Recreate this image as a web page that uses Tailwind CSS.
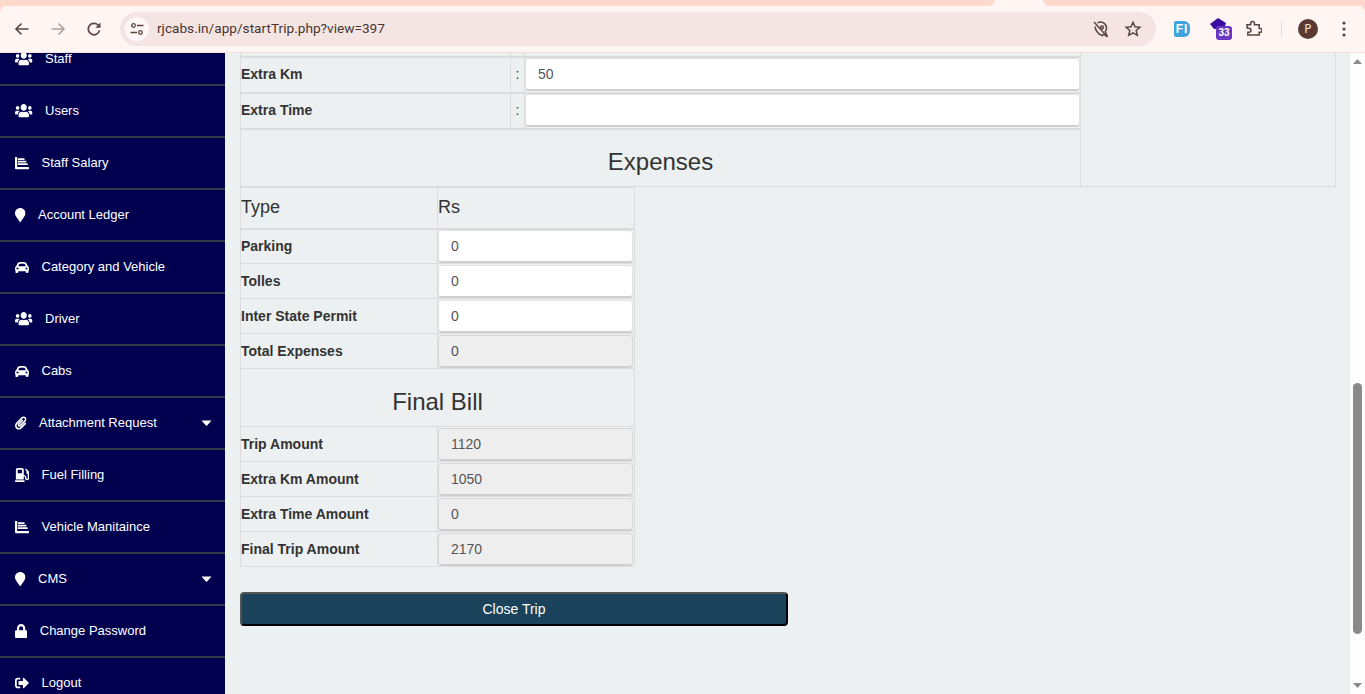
<!DOCTYPE html>
<html lang="en">
<head>
  <meta charset="UTF-8">
  <meta name="viewport" content="width=device-width, initial-scale=1.0">
  <title>Start Trip</title>
  <script src="https://cdn.jsdelivr.net/npm/@tailwindcss/browser@4"></script>
</head>
<body class="h-screen overflow-hidden flex flex-col bg-[#ecf0f1] font-['Liberation_Sans',Arial,sans-serif] text-[#333]">
  <svg class="hidden">
    <symbol id="i-users" viewBox="0 30 640 452" preserveAspectRatio="none"><path fill="currentColor" d="M96 224c35.3 0 64-28.7 64-64s-28.7-64-64-64-64 28.7-64 64 28.7 64 64 64zm448 0c35.3 0 64-28.7 64-64s-28.7-64-64-64-64 28.7-64 64 28.7 64 64 64zm32 32h-64c-17.6 0-33.5 7.1-45.1 18.6 40.3 22.1 68.9 62 75.1 109.4h66c17.7 0 32-14.3 32-32v-32c0-35.3-28.7-64-64-64zm-256 0c61.9 0 112-50.1 112-112S381.9 32 320 32 208 82.1 208 144s50.1 112 112 112zm76.8 32h-8.3c-20.8 10-43.9 16-68.5 16s-47.6-6-68.5-16h-8.3C179.6 288 128 339.6 128 403.2V432c0 26.5 21.5 48 48 48h288c26.5 0 48-21.5 48-48v-28.8c0-63.6-51.6-115.2-115.2-115.2zm-223.7-13.4C161.5 263.1 145.6 256 128 256H64c-35.3 0-64 28.7-64 64v32c0 17.7 14.3 32 32 32h65.9c6.3-47.4 34.9-87.3 75.2-109.4z"/></symbol>
    <symbol id="i-chart" viewBox="0 0 512 512"><path fill="currentColor" d="M0 48c0-9 7-16 16-16h48c9 0 16 7 16 16v352h416c9 0 16 7 16 16v48c0 9-7 16-16 16H32c-18 0-32-14-32-32V48zm104 32h232c9 0 16 7 16 16v32c0 9-7 16-16 16H104zm0 94h296c9 0 16 7 16 16v32c0 9-7 16-16 16H104zm0 94h344c9 0 16 7 16 16v32c0 9-7 16-16 16H104z"/></symbol>
    <symbol id="i-marker" viewBox="0 0 384 512"><path fill="currentColor" d="M172.268 501.67C26.97 291.031 0 256 0 192 0 85.961 85.961 0 192 0s192 85.961 192 192c0 64-26.97 99.031-172.268 309.67-9.535 13.774-29.93 13.773-39.464 0z"/></symbol>
    <symbol id="i-car" viewBox="16 64 480 384" preserveAspectRatio="none"><path fill="currentColor" d="M423.48 134.400C406.38 91.63 365.57 64 319.5 64h-127c-46.06 0-86.88 27.63-103.99 70.4L60 206C30 232 16 252.780 16 272v48c0 16.120 6.160 30.670 16 41.930V416c0 17.670 14.330 32 32 32h32c17.670 0 32-14.330 32-32v-32h256v32c0 17.670 14.330 32 32 32h32c17.670 0 32-14.330 32-32v-54.070c9.840-11.250 16-25.800 16-41.930v-48c0-19.220-14-40-44-66zm-275.550 23.770c7.290-18.220 24.940-30.170 44.570-30.170h127c19.630 0 37.280 11.950 44.570 30.170L384 208H128l19.930-49.830zM96 319.800c-19.200 0-32-12.760-32-31.900S76.800 256 96 256s48 28.710 48 47.850-28.800 15.950-48 15.950zm320 0c-19.200 0-48 3.190-48-15.950S396.800 256 416 256s32 12.760 32 31.900-12.800 31.900-32 31.900z"/></symbol>
    <symbol id="i-clip" viewBox="0 0 448 512"><path fill="currentColor" d="M43.246 466.142c-58.43-60.289-57.341-157.511 1.386-217.581L254.392 34c44.316-45.332 116.351-45.336 160.671 0 43.89 44.894 43.943 117.329 0 162.276L232.214 383.128c-29.855 30.537-78.633 30.111-107.982-.998-28.275-29.97-27.368-77.473 1.452-106.953l143.743-146.835c6.182-6.314 16.312-6.422 22.626-.241l22.861 22.379c6.315 6.182 6.422 16.312.241 22.626L171.427 319.927c-4.932 5.045-5.236 13.428-.648 18.292 4.372 4.634 11.245 4.711 15.688.165l182.849-186.851c19.613-20.062 19.613-52.725-.011-72.798-19.189-19.627-49.957-19.637-69.154 0L90.39 293.295c-34.763 35.56-35.299 93.12-1.191 128.313 34.01 35.093 88.985 35.137 123.058.286l172.06-175.999c6.177-6.319 16.307-6.433 22.626-.256l22.877 22.364c6.319 6.177 6.434 16.307.256 22.626l-172.06 175.998c-59.576 60.938-155.943 60.216-214.77-.485z"/></symbol>
    <symbol id="i-gas" viewBox="0 0 512 512"><path fill="currentColor" d="M336 448H16c-8.8 0-16 7.2-16 16v32c0 8.8 7.2 16 16 16h320c8.8 0 16-7.2 16-16v-32c0-8.8-7.2-16-16-16zm157.2-340.7l-81-81c-6.2-6.2-16.4-6.2-22.6 0l-11.3 11.3c-6.2 6.2-6.2 16.4 0 22.6L416 97.9V160c0 28.1 20.9 51.3 48 55.2V376c0 13.2-10.8 24-24 24s-24-10.8-24-24v-32c0-48.6-39.4-88-88-88h-8V64c0-35.3-28.7-64-64-64H96C60.7 0 32 28.7 32 64v352h288V304h8c22.1 0 40 17.9 40 40v27.8c0 37.7 27 72 64.5 75.9 43 4.3 79.5-29.5 79.5-71.7V152.6c0-17-6.8-33.3-18.8-45.3zM256 192H96V64h160v128z"/></symbol>
    <symbol id="i-lock" viewBox="0 0 448 512"><path fill="currentColor" d="M400 224h-24v-72C376 68.2 307.8 0 224 0S72 68.2 72 152v72H48c-26.5 0-48 21.5-48 48v192c0 26.5 21.5 48 48 48h352c26.5 0 48-21.5 48-48V272c0-26.5-21.5-48-48-48zm-104 0H152v-72c0-39.7 32.3-72 72-72s72 32.3 72 72v72z"/></symbol>
    <symbol id="i-out" viewBox="0 0 512 512"><path fill="currentColor" d="M497 273L329 441c-15 15-41 4.5-41-17v-96H152c-13.3 0-24-10.7-24-24v-96c0-13.3 10.7-24 24-24h136V88c0-21.4 25.9-32 41-17l168 168c9.3 9.4 9.3 24.6 0 34zM192 436v-40c0-6.6-5.4-12-12-12H96c-17.7 0-32-14.3-32-32V160c0-17.7 14.3-32 32-32h84c6.6 0 12-5.4 12-12V76c0-6.6-5.4-12-12-12H96c-53 0-96 43-96 96v192c0 53 43 96 96 96h84c6.6 0 12-5.4 12-12z"/></symbol>
    <symbol id="i-caret" viewBox="0 0 10 6"><path fill="currentColor" d="M0 .5h10L5.600 5.400a.8.8 0 0 1-1.200 0z"/></symbol>
  </svg>

  <!-- browser chrome -->
  <header class="shrink-0 bg-[#ffd9cc]">
    <div class="flex h-[6px] bg-[#fff5f2]">
      <div class="w-[995px] bg-[#ffd9cc] rounded-br-[8px]"></div>
      <div class="w-[48px]"></div>
      <div class="flex-1 bg-[#ffd9cc] rounded-bl-[8px]"></div>
    </div>
    <div class="h-[48px] bg-[#fff5f2] rounded-t-[8px] -mt-px border-b border-[#f8dfd8] flex items-center pl-[14px] text-[#5b4540]">
      <svg class="w-4 h-4" viewBox="0 0 16 16" fill="none" stroke="currentColor" stroke-width="1.6"><path d="M14.5 8H2M7.5 2.5 2 8l5.500 5.500"/></svg>
      <svg class="w-4 h-4 ml-[20px] text-[#b3a09b]" viewBox="0 0 16 16" fill="none" stroke="currentColor" stroke-width="1.6"><path d="M1.500 8H14M8.500 2.500 14 8l-5.500 5.500"/></svg>
      <svg class="w-4 h-4 ml-[20px]" viewBox="0 0 16 16" fill="none" stroke="currentColor" stroke-width="1.700"><path d="M13.500 9.500A5.700 5.700 0 1 1 12 4"/><path fill="currentColor" stroke="none" d="M14.500 1.500v5.200H9.300z"/></svg>
      <div class="ml-[18px] w-[1036px] h-[34px] rounded-full bg-[#f4e5e3] flex items-center pl-[5px] pr-[14px]">
        <div class="w-[24px] h-[24px] rounded-full bg-[#fff8f6] flex items-center justify-center">
          <svg class="w-[14px] h-[14px]" viewBox="0 0 14 14" fill="none" stroke="currentColor" stroke-width="1.300"><circle cx="3.500" cy="3.500" r="1.800"/><path d="M7 3.500h6.500M.5 10.500H7"/><circle cx="10.500" cy="10.500" r="1.800"/></svg>
        </div>
        <span class="ml-[8px] font-['Roboto',sans-serif] text-[13.650px] text-[#4a3633]">rjcabs.in/app/startTrip.php?view=397</span>
        <svg class="ml-auto w-[18px] h-[18px]" viewBox="0 0 18 18" fill="none" stroke="currentColor" stroke-width="1.500"><path d="M5.500 2.800a6 6 0 0 1 9 5.200c0 1.500-.5 2.600-1.200 3.500l1.700 4.500-4.600-1.600M3.300 6.500c-.3 2.800 1.700 5.500 3.700 7.500l4 2"/><circle cx="10" cy="7.500" r="1.400"/><path d="M2 2l13.500 15"/></svg>
        <svg class="ml-[14px] w-[18px] h-[18px]" viewBox="0 0 18 18" fill="none" stroke="currentColor" stroke-width="1.500"><path d="m9 2.300 2 4.500 4.900.5-3.700 3.200 1.100 4.800L9 12.800l-4.300 2.500 1.100-4.800L2.100 7.300 7 6.800z"/></svg>
      </div>
      <div class="ml-[18px] w-[16px] h-[16px] bg-[#3fa3e0] rounded-[2px] rounded-r-[6px] flex items-center justify-center text-white text-[12px] font-bold leading-none tracking-[1px]">FI</div>
      <div class="relative ml-[20px] w-[22px] h-[22px]">
        <svg class="absolute left-0 top-0 w-[16px] h-[13px]" viewBox="0 0 16 13"><path fill="#3a0ca3" d="M8 0l8 5-2 6H4L0 6z"/></svg>
        <span class="absolute left-[6px] top-[8px] w-[16px] h-[14px] rounded-[3px] bg-[#6a35c0] text-white text-[10px] font-bold leading-[14px] text-center">33</span>
      </div>
      <svg class="ml-[13px] w-[17px] h-[17px]" viewBox="0 0 18 18" fill="none" stroke="currentColor" stroke-width="1.600"><path d="M2 5h4V3.500a2 2 0 0 1 4 0V5h5v4h1a2 2 0 0 1 0 4h-1v3H3v-3h1.200a2 2 0 0 0 0-4.200H2.500z"/></svg>
      <div class="ml-[19px] w-px h-[16px] bg-[#fcd5c8]"></div>
      <div class="ml-[16px] w-[20px] h-[20px] rounded-full bg-[#5a3a30] text-[#f5e8e4] text-[12px] font-['Noto_Sans',sans-serif] flex items-center justify-center">P</div>
      <svg class="ml-[24px] w-[4px] h-[16px]" viewBox="0 0 4 16"><circle cx="2" cy="2" r="1.600" fill="currentColor"/><circle cx="2" cy="8" r="1.600" fill="currentColor"/><circle cx="2" cy="14" r="1.600" fill="currentColor"/></svg>
    </div>
  </header>

  <div class="flex-1 flex min-h-0">
    <!-- sidebar -->
    <nav class="w-[225px] shrink-0 overflow-hidden bg-[#00004f] text-white text-[13px]">
      <ul class="-mt-[19px] [&>li]:h-[52px] [&>li]:border-b-2 [&>li]:border-[#333a4a] [&>li]:flex [&>li]:items-center [&>li]:pl-[15px] [&>li]:pr-[13px] [&>li]:gap-[12.500px]">
        <li><svg class="w-[17.500px] h-[13.500px]"><use href="#i-users"/></svg>Staff</li>
        <li><svg class="w-[17.500px] h-[13.500px]"><use href="#i-users"/></svg>Users</li>
        <li><svg class="w-[14px] h-[14px]"><use href="#i-chart"/></svg>Staff Salary</li>
        <li><svg class="w-[10.500px] h-[14px]"><use href="#i-marker"/></svg>Account Ledger</li>
        <li><svg class="w-[14px] h-[11px]"><use href="#i-car"/></svg>Category and Vehicle</li>
        <li><svg class="w-[17.500px] h-[13.500px]"><use href="#i-users"/></svg>Driver</li>
        <li><svg class="w-[14px] h-[11px]"><use href="#i-car"/></svg>Cabs</li>
        <li><svg class="w-[11.500px] h-[14px]"><use href="#i-clip"/></svg>Attachment Request<svg class="ml-auto w-[11px] h-[6px]"><use href="#i-caret"/></svg></li>
        <li><svg class="w-[14px] h-[14px]"><use href="#i-gas"/></svg>Fuel Filling</li>
        <li><svg class="w-[14px] h-[14px]"><use href="#i-chart"/></svg>Vehicle Manitaince</li>
        <li><svg class="w-[10.500px] h-[14px]"><use href="#i-marker"/></svg>CMS<svg class="ml-auto w-[11px] h-[6px]"><use href="#i-caret"/></svg></li>
        <li><svg class="w-[12.250px] h-[14px]"><use href="#i-lock"/></svg>Change Password</li>
        <li><svg class="w-[14px] h-[14px]"><use href="#i-out"/></svg>Logout</li>
      </ul>
    </nav>

    <!-- content -->
    <main class="flex-1 min-w-0 overflow-hidden pl-[15px] text-[14px]">
      <table class="table-fixed w-[1095px] -mt-[33px] border-collapse [&_td]:border-[#dcdcdc] [&_td]:border [&_td]:p-0">
        <colgroup><col class="w-[270px]"><col class="w-[14px]"><col class="w-[556px]"><col class="w-[255px]"></colgroup>
        <tr class="h-[36px]"><td class="border-b-2!"></td><td class="border-b-2!"></td><td class="border-b-2!"></td><td rowspan="4"></td></tr>
        <tr class="h-[36px]">
          <td class="font-bold border-b-2!">Extra Km</td>
          <td class="text-center border-b-2!">:</td>
          <td class="border-b-2!"><input value="50" class="block w-full h-[33px] bg-white rounded-[4px] border border-[#e2e2e2] border-b-2 border-b-[#cfcfcf] px-3 text-[#555] outline-none"></td>
        </tr>
        <tr class="h-[36px]">
          <td class="font-bold border-b-2!">Extra Time</td>
          <td class="text-center border-b-2!">:</td>
          <td class="border-b-2!"><input class="block w-full h-[33px] bg-white rounded-[4px] border border-[#e2e2e2] border-b-2 border-b-[#cfcfcf] px-3 text-[#555] outline-none"></td>
        </tr>
        <tr class="h-[58px]"><td colspan="3" class="text-center text-[24px] align-bottom pb-[6px]!">Expenses</td></tr>
      </table>

      <table class="table-fixed w-[394px] border-collapse [&_td]:border-[#dcdcdc] [&_td]:border [&_td]:p-0">
        <colgroup><col class="w-[197px]"><col class="w-[197px]"></colgroup>
        <tr class="h-[41px] text-[18px]"><td class="border-b-2!">Type</td><td class="border-b-2!">Rs</td></tr>
        <tr class="h-[35px]"><td class="font-bold">Parking</td><td><input value="0" class="block w-[195px] h-[33px] bg-white rounded-[4px] border border-[#e2e2e2] border-b-2 border-b-[#cfcfcf] px-3 text-[#555] outline-none"></td></tr>
        <tr class="h-[35px]"><td class="font-bold">Tolles</td><td><input value="0" class="block w-[195px] h-[33px] bg-white rounded-[4px] border border-[#e2e2e2] border-b-2 border-b-[#cfcfcf] px-3 text-[#555] outline-none"></td></tr>
        <tr class="h-[35px]"><td class="font-bold">Inter State Permit</td><td><input value="0" class="block w-[195px] h-[33px] bg-white rounded-[4px] border border-[#e2e2e2] border-b-2 border-b-[#cfcfcf] px-3 text-[#555] outline-none"></td></tr>
        <tr class="h-[35px]"><td class="font-bold">Total Expenses</td><td><input value="0" disabled class="block w-[195px] h-[33px] bg-[#eee] rounded-[4px] border border-[#d8d8d8] border-b-2 border-b-[#cfcfcf] px-3 text-[#555] outline-none"></td></tr>
        <tr class="h-[58px]"><td colspan="2" class="text-center text-[24px] align-bottom pb-[6px]!">Final Bill</td></tr>
        <tr class="h-[35px]"><td class="font-bold">Trip Amount</td><td><input value="1120" disabled class="block w-[195px] h-[33px] bg-[#eee] rounded-[4px] border border-[#d8d8d8] border-b-2 border-b-[#cfcfcf] px-3 text-[#555] outline-none"></td></tr>
        <tr class="h-[35px]"><td class="font-bold">Extra Km Amount</td><td><input value="1050" disabled class="block w-[195px] h-[33px] bg-[#eee] rounded-[4px] border border-[#d8d8d8] border-b-2 border-b-[#cfcfcf] px-3 text-[#555] outline-none"></td></tr>
        <tr class="h-[35px]"><td class="font-bold">Extra Time Amount</td><td><input value="0" disabled class="block w-[195px] h-[33px] bg-[#eee] rounded-[4px] border border-[#d8d8d8] border-b-2 border-b-[#cfcfcf] px-3 text-[#555] outline-none"></td></tr>
        <tr class="h-[35px]"><td class="font-bold">Final Trip Amount</td><td><input value="2170" disabled class="block w-[195px] h-[33px] bg-[#eee] rounded-[4px] border border-[#d8d8d8] border-b-2 border-b-[#cfcfcf] px-3 text-[#555] outline-none"></td></tr>
      </table>

      <button class="block mt-[25px] w-[548px] h-[34px] rounded-[4px] bg-[#1a425a] text-white text-[14px] border-2 border-t-[#555] border-l-[#555] border-r-black border-b-black">Close Trip</button>
    </main>

    <!-- scrollbar -->
    <div class="w-[15px] shrink-0 bg-[#fdfdfd] flex flex-col items-center">
      <svg class="mt-[6px] w-[9px] h-[5px]" viewBox="0 0 9 5"><path fill="#8a8a8a" d="M4.500 0 9 5H0z"/></svg>
      <div class="mt-[319px] w-[9px] h-[251px] rounded-full bg-[#8a8a8a]"></div>
      <svg class="mt-auto mb-[6px] w-[9px] h-[5px]" viewBox="0 0 9 5"><path fill="#8a8a8a" d="M4.500 5 9 0H0z"/></svg>
    </div>
  </div>
</body>
</html>
